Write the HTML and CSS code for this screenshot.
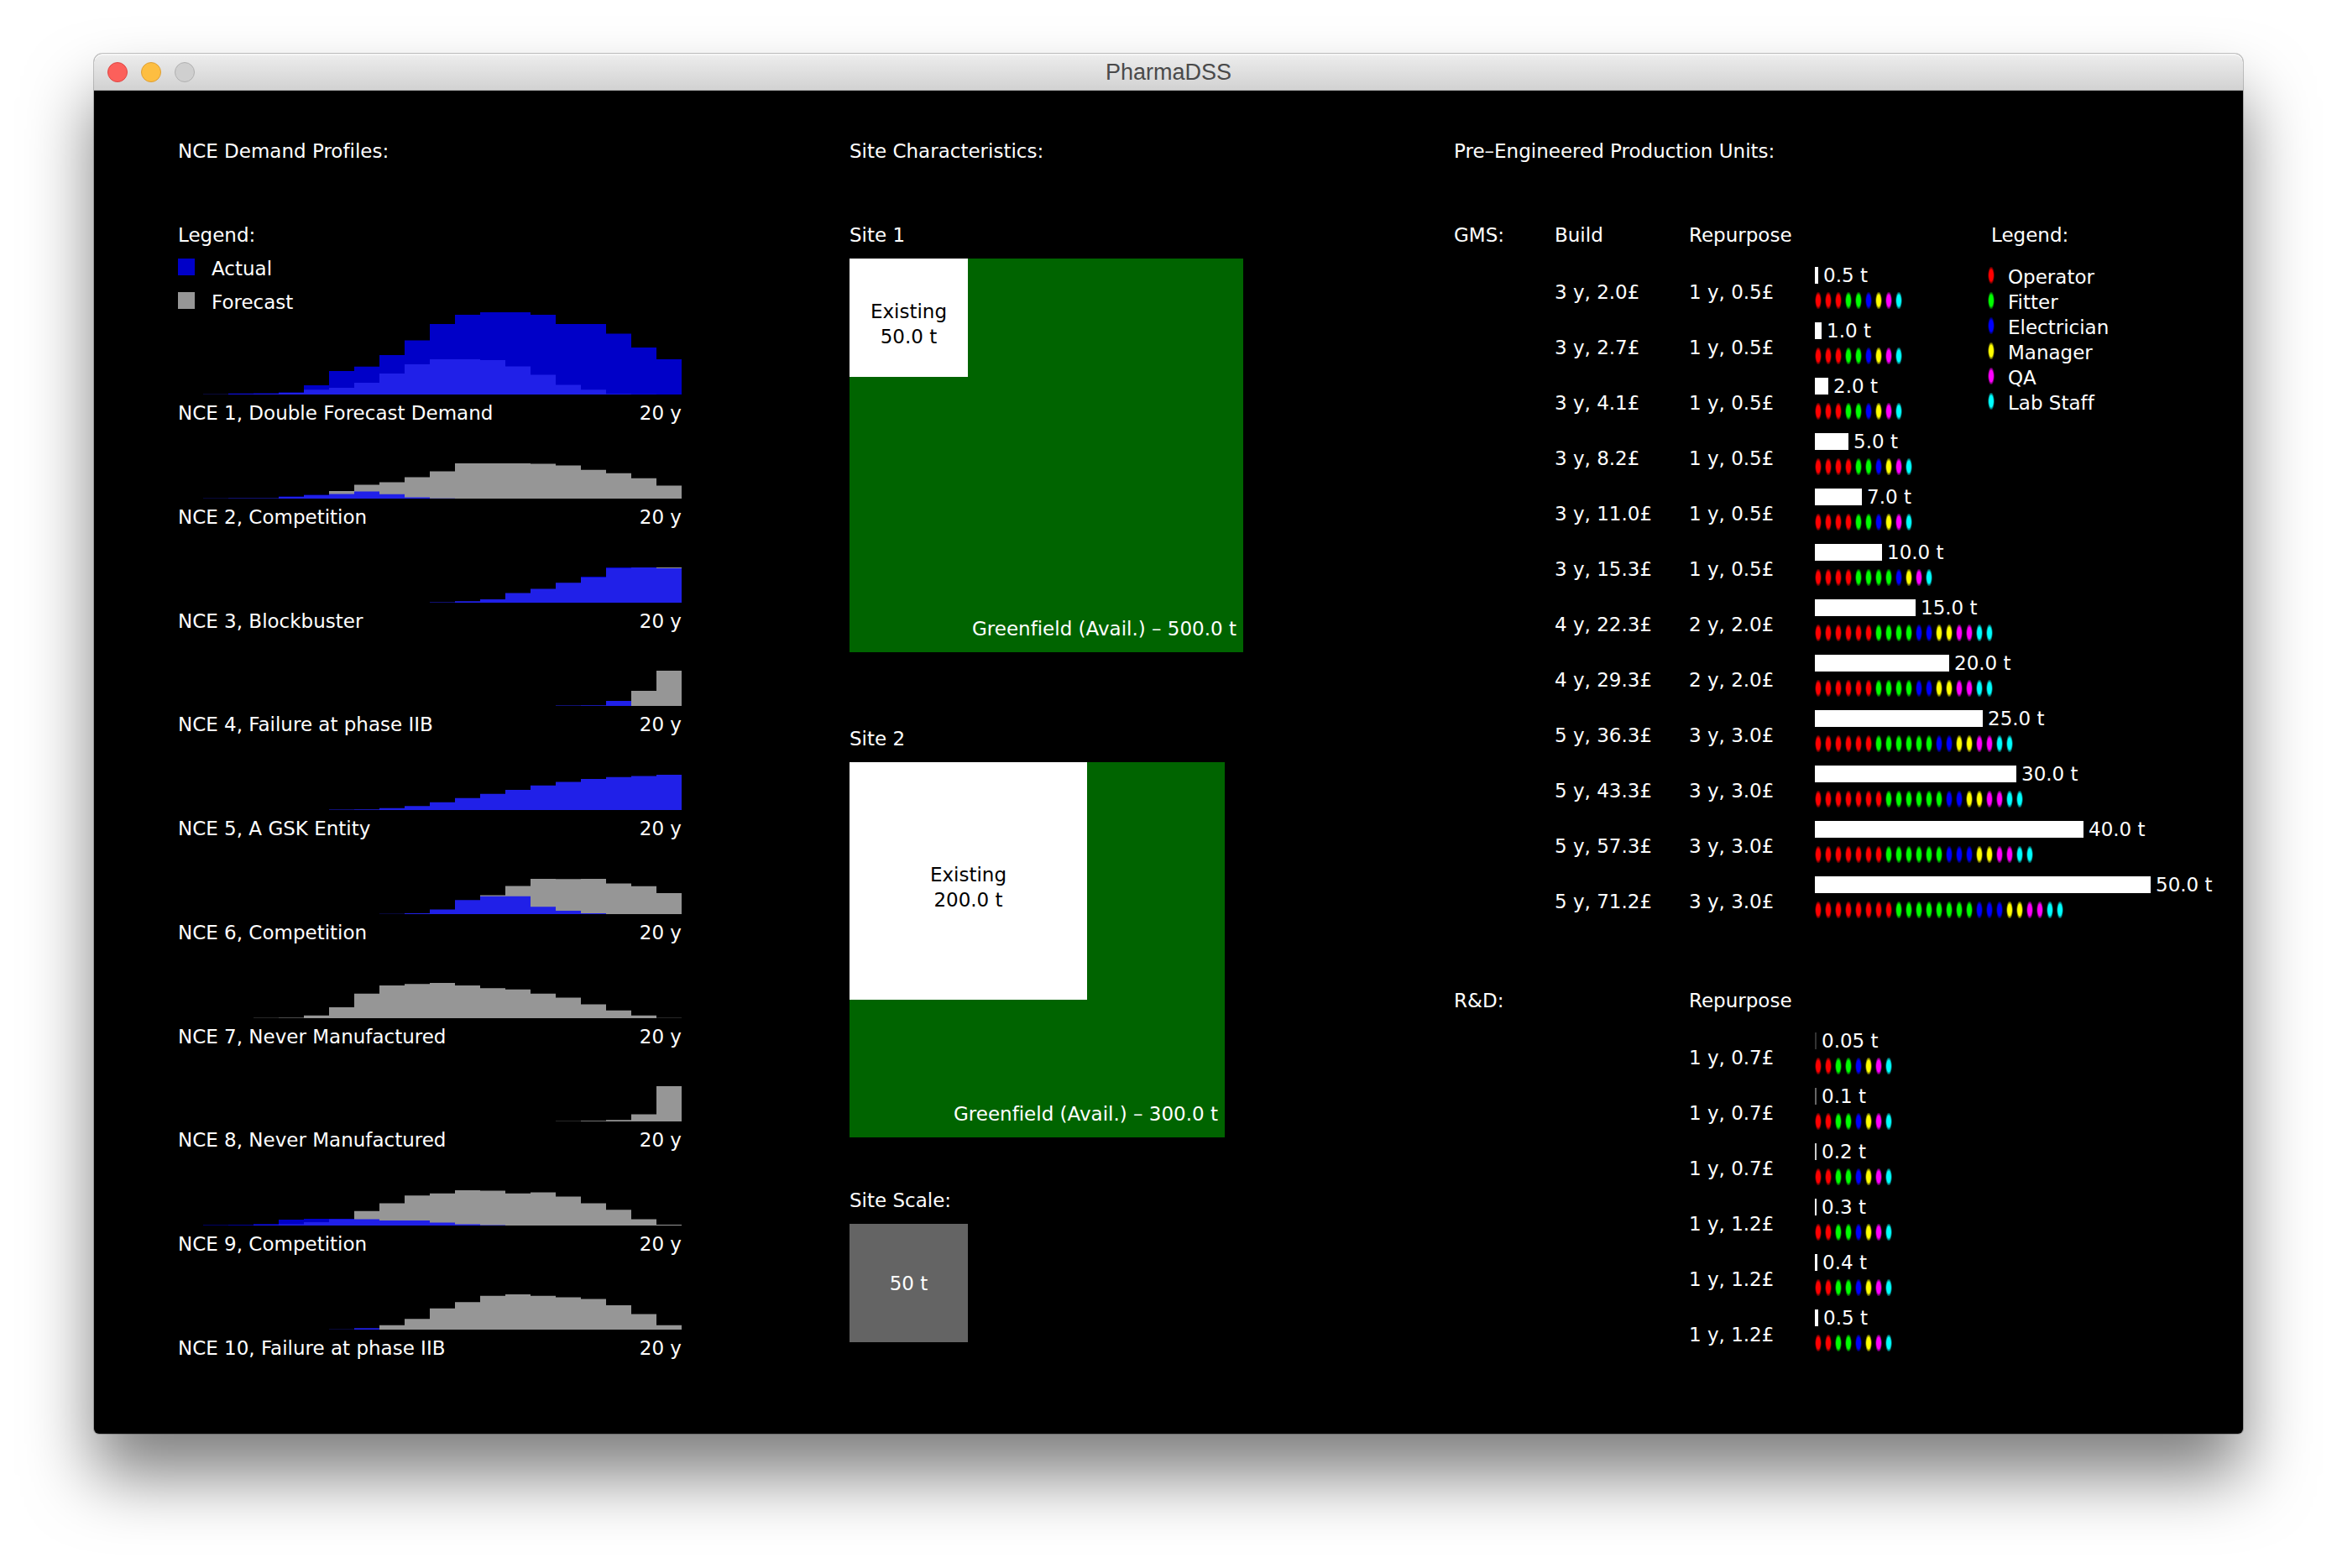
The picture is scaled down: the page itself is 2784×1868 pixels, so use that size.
FILE: index.html
```html
<!DOCTYPE html>
<html lang="en">
<head>
<meta charset="utf-8">
<title>PharmaDSS</title>
<link rel="stylesheet" href="styles.css">
</head>
<body>
<div class="window">
  <header class="titlebar">
    <div class="controls">
      <button class="control close" type="button" aria-label="Close"></button>
      <button class="control minimise" type="button" aria-label="Minimise"></button>
      <button class="control zoom" type="button" aria-label="Zoom" disabled></button>
    </div>
    <h1 class="title">PharmaDSS</h1>
  </header>

  <main class="workspace">
    <section class="panel">
      <h2 class="heading">NCE Demand Profiles:</h2>
      <div class="series-legend">
        <h3 class="label">Legend:</h3>
        <p class="key"><span class="swatch actual"></span>Actual</p>
        <p class="key"><span class="swatch forecast"></span>Forecast</p>
      </div>
      <div class="profiles" id="profiles"></div>
    </section>

    <section class="panel">
      <h2 class="heading">Site Characteristics:</h2>
      <article class="site">
        <h3 class="label">Site 1</h3>
        <div class="plot greenfield" style="width: 469px">
          <div class="plot existing" style="width: 141px"><span>Existing<br>50.0 t</span></div>
          <p class="available">Greenfield (Avail.) – 500.0 t</p>
        </div>
      </article>
      <article class="site">
        <h3 class="label">Site 2</h3>
        <div class="plot greenfield" style="width: 447px">
          <div class="plot existing" style="width: 283px"><span>Existing<br>200.0 t</span></div>
          <p class="available">Greenfield (Avail.) – 300.0 t</p>
        </div>
      </article>
      <article class="site-scale">
        <h3 class="label">Site Scale:</h3>
        <div class="plot scale" style="width: 141px">50 t</div>
      </article>
    </section>

    <section class="panel">
      <h2 class="heading">Pre–Engineered Production Units:</h2>
      <div class="units">
        <div class="tables">
          <table class="unit-table">
            <thead><tr><th scope="col">GMS:</th><th scope="col">Build</th><th scope="col">Repurpose</th><td></td></tr></thead>
            <tbody id="gms"></tbody>
          </table>
          <table class="unit-table">
            <thead><tr><th scope="col">R&amp;D:</th><td></td><th scope="col">Repurpose</th><td></td></tr></thead>
            <tbody id="rnd"></tbody>
          </table>
        </div>
        <aside class="staff-legend">
          <h3 class="label">Legend:</h3>
          <ul class="staff">
            <li class="staff-key"><span class="crew operator"></span>Operator</li>
            <li class="staff-key"><span class="crew fitter"></span>Fitter</li>
            <li class="staff-key"><span class="crew electrician"></span>Electrician</li>
            <li class="staff-key"><span class="crew manager"></span>Manager</li>
            <li class="staff-key"><span class="crew qa"></span>QA</li>
            <li class="staff-key"><span class="crew lab"></span>Lab Staff</li>
          </ul>
        </aside>
      </div>
    </section>
  </main>
</div>
<script src="script.js"></script>
</body>
</html>
```
FILE: styles.css
```css
* {
  box-sizing: border-box;
}

body {
  display: flex;
  flex-direction: column;
  min-height: 100vh;
  margin: 0;
  padding: 64px 112px 160px;
  background: #fff;
  color: #fff;
  font: 23px/30px "DejaVu Sans", sans-serif;
  font-variant-ligatures: none;
}

h1, h2, h3, p, ul {
  margin: 0;
  padding: 0;
  font: inherit;
  list-style: none;
}

.window {
  display: flex;
  flex: 1;
  flex-direction: column;
  border-radius: 10px 10px 6px 6px;
  background: #000;
  box-shadow: 0 0 0 1px rgba(0, 0, 0, .22), 0 50px 80px rgba(0, 0, 0, .5);
}

/* Title bar */
.titlebar {
  display: grid;
  grid-template-columns: 1fr auto 1fr;
  align-items: center;
  height: 44px;
  padding: 0 16px;
  border-bottom: 1px solid #adadad;
  border-radius: 10px 10px 0 0;
  background: linear-gradient(#ededed, #d2d2d2);
  box-shadow: inset 0 2px 0 #f5f5f5;
}

.controls {
  display: flex;
  gap: 16px;
}

.control {
  width: 24px;
  height: 24px;
  padding: 0;
  border: 1px solid;
  border-radius: 50%;
}

.close { background: #fc605b; border-color: #df4744; }
.minimise { background: #fdbe41; border-color: #de9f34; }
.zoom { background: #cfcfcf; border-color: #b1b1b1; }

.title {
  color: #4a4a4a;
  font: 27px/30px "Liberation Sans", sans-serif;
}

/* Panels */
.workspace {
  display: grid;
  flex: 1;
  grid-template-columns: 800fr 720fr 940fr;
  padding: 57px 0 87px 100px;
}

.panel {
  display: flex;
  flex-direction: column;
  min-width: 0;
}

.heading {
  margin-bottom: 70px;
}

/* Demand profiles */
.series-legend {
  display: flex;
  flex-direction: column;
  gap: 10px;
  margin-bottom: 47px;
}

.key {
  display: flex;
  align-items: center;
  gap: 20px;
}

.swatch {
  width: 20px;
  height: 20px;
  margin-bottom: 4px;
}

.swatch.actual { background: #0000c8; }
.swatch.forecast { background: #969696; }

.profiles {
  display: flex;
  flex: 1;
  flex-direction: column;
  justify-content: space-between;
  width: 600px;
}

.profile {
  display: grid;
  gap: 7px;
}

.chart {
  display: block;
  width: 100%;
  height: 48px;
  overflow: visible;
}

.chart .actual { fill: #0000c8; }
.chart .forecast { fill: #969696; }
.chart .both { fill: #2020e8; }

.caption {
  display: flex;
  justify-content: space-between;
}

/* Sites */
.site {
  margin-bottom: 88px;
}

.site + .site {
  margin-bottom: 60px;
}

.site .label,
.site-scale .label {
  margin-bottom: 13px;
}

.plot {
  display: flex;
  aspect-ratio: 1;
}

.greenfield {
  flex-direction: column;
  justify-content: space-between;
  background: #006400;
}

.existing {
  align-items: center;
  justify-content: center;
  padding-top: 14px;
  background: #fff;
  color: #000;
  text-align: center;
}

.available {
  padding: 0 8px 13px;
  text-align: right;
}

.scale {
  align-items: center;
  justify-content: center;
  background: #646464;
}

/* Production units: the staff legend shares the table's cell */
.units {
  display: grid;
}

.tables,
.staff-legend {
  grid-area: 1 / 1;
}

.tables {
  display: grid;
  gap: 77px;
}

.unit-table {
  width: 100%;
  border-collapse: collapse;
  table-layout: fixed;
}

.unit-table th,
.unit-table td {
  padding: 0;
  font-weight: normal;
  text-align: left;
  vertical-align: top;
}

.unit-table thead th { height: 43px; }
.unit-table thead :nth-child(1) { width: 120px; }
.unit-table thead :nth-child(2) { width: 160px; }
.unit-table thead :nth-child(3) { width: 150px; }

.unit-table tbody td {
  height: 66px;
  padding-top: 25px;
}

.unit-table tbody .capacity {
  padding-top: 5px;
}

.output {
  display: flex;
  align-items: center;
  gap: 6px;
  margin-bottom: 5px;
}

.bar {
  height: 20px;
  background: #fff;
}

.crews {
  display: flex;
}

.crew {
  width: calc(var(--count) * 12px);
  height: 20px;
  background: radial-gradient(4px 11px at 4px 10px, var(--tone) 60%, transparent) 0 0 / 12px 20px;
}

.operator { --tone: #f00; }
.fitter { --tone: #0f0; }
.electrician { --tone: #00f; }
.manager { --tone: #ff0; }
.qa { --tone: #f0f; }
.lab { --tone: #0ff; }

.staff-legend {
  justify-self: start;
  margin-left: 636px;
}

.staff-legend .label {
  margin: 0 0 20px 4px;
}

.staff-key {
  display: flex;
  align-items: center;
  gap: 16px;
}

.staff-key .crew {
  width: 8px;
  margin-bottom: 4px;
}
```
FILE: script.js
```js
// Yearly demand over 20 years, from year `start`; "both" is where actual and forecast coincide.
const profiles = [
  { name: "NCE 1, Double Forecast Demand",
    actual: [2, [.6, .8, 1.2, 5.5, 14, 16.6, 23.5, 32.2, 42, 47.5, 49, 49, 47.5, 42, 42, 36.3, 28, 21]],
    both: [1, [.1, .2, .4, 1, 2.9, 4, 7, 12.5, 18, 21, 21, 20.5, 16.8, 11.8, 5.8, 2.9, .4, .1]] },
  { name: "NCE 2, Competition",
    forecast: [6, [4.5, 8.2, 9.7, 12.7, 16.2, 21, 21, 21, 20.8, 19.7, 17.1, 15.1, 12.1, 7.7]],
    actual: [4, [1.3, 2.3]],
    both: [1, [.1, .2, .3, 1, 2, 2.7, 4.2, 2.6, .7, .1]] },
  { name: "NCE 3, Blockbuster",
    forecast: [19, [21]],
    actual: [16, [15.5, 21]],
    both: [8, [.05, .05, .2, .9, 2, 5.7, 8.2, 11.9, 15, 20.5, 21, 20.5]] },
  { name: "NCE 4, Failure at phase IIB",
    forecast: [18, [9, 21]],
    both: [15, [.2, .4, 3]] },
  { name: "NCE 5, A GSK Entity",
    both: [5, [.05, .2, .4, 1.1, 2.4, 4.6, 7.1, 9.6, 12, 14.6, 16.7, 18.5, 19.6, 20.3, 21]] },
  { name: "NCE 6, Competition",
    forecast: [12, [11.2, 16.7, 21, 20.9, 21, 18.2, 16.6, 12.5]],
    both: [7, [.05, .15, .5, 2.7, 8.4, 10.6, 10.6, 4.4, 2, .5]] },
  { name: "NCE 7, Never Manufactured",
    forecast: [2, [.05, .1, .3, 1.6, 6.5, 14.6, 19.5, 20.4, 21, 19.5, 17.9, 17.1, 14.6, 12.2, 8.2, 4.6, 1.6, .15]] },
  { name: "NCE 8, Never Manufactured",
    forecast: [15, [.1, .4, .9, 4.2, 21]] },
  { name: "NCE 9, Competition",
    forecast: [7, [8.6, 13.3, 17.9, 19.1, 21, 20.8, 19.1, 19.8, 17.2, 13.3, 9.4, 3.7, .5]],
    actual: [1, [.2, .4, .9, 3.5, 4, 4]],
    both: [3, [.4, .8, 2, 3.8, 3.8, 3, 3, 1.8, .8, .3]] },
  { name: "NCE 10, Failure at phase IIB",
    forecast: [8, [2.6, 6.4, 12.6, 16.4, 20.1, 21, 20.1, 19.2, 18.3, 14.5, 9.2, 2.6]],
    both: [5, [.05, .1, .9]] }
];

// A stepped outline standing on the chart's base line at y = 24.
function outline([start, values]) {
  const steps = values.map(v => `V${24 - v}h15`).join("");
  return `M${start * 15} 24${steps}V24z`;
}

document.getElementById("profiles").innerHTML = profiles.map(p => `
  <div class="profile">
    <svg class="chart" viewBox="0 0 300 24" role="img" aria-label="${p.name}">
      ${["forecast", "actual", "both"].filter(s => p[s]).map(s => `<path class="${s}" d="${outline(p[s])}"/>`).join("")}
    </svg>
    <div class="caption"><span>${p.name}</span><span>20 y</span></div>
  </div>`).join("");

const roles = ["operator", "fitter", "electrician", "manager", "qa", "lab"];

// Build cost, repurpose cost, capacity in tonnes, staff by role.
const gms = [
  ["3 y, 2.0£", "1 y, 0.5£", "0.5", [3, 2, 1, 1, 1, 1]],
  ["3 y, 2.7£", "1 y, 0.5£", "1.0", [3, 2, 1, 1, 1, 1]],
  ["3 y, 4.1£", "1 y, 0.5£", "2.0", [3, 2, 1, 1, 1, 1]],
  ["3 y, 8.2£", "1 y, 0.5£", "5.0", [4, 2, 1, 1, 1, 1]],
  ["3 y, 11.0£", "1 y, 0.5£", "7.0", [4, 2, 1, 1, 1, 1]],
  ["3 y, 15.3£", "1 y, 0.5£", "10.0", [4, 4, 1, 1, 1, 1]],
  ["4 y, 22.3£", "2 y, 2.0£", "15.0", [6, 4, 2, 2, 2, 2]],
  ["4 y, 29.3£", "2 y, 2.0£", "20.0", [6, 4, 2, 2, 2, 2]],
  ["5 y, 36.3£", "3 y, 3.0£", "25.0", [6, 6, 2, 2, 2, 2]],
  ["5 y, 43.3£", "3 y, 3.0£", "30.0", [7, 6, 2, 2, 2, 2]],
  ["5 y, 57.3£", "3 y, 3.0£", "40.0", [7, 6, 3, 2, 2, 2]],
  ["5 y, 71.2£", "3 y, 3.0£", "50.0", [8, 8, 3, 2, 2, 2]]
];
const rnd = [
  ["", "1 y, 0.7£", "0.05", [2, 2, 1, 1, 1, 1]],
  ["", "1 y, 0.7£", "0.1", [2, 2, 1, 1, 1, 1]],
  ["", "1 y, 0.7£", "0.2", [2, 2, 1, 1, 1, 1]],
  ["", "1 y, 1.2£", "0.3", [2, 2, 1, 1, 1, 1]],
  ["", "1 y, 1.2£", "0.4", [2, 2, 1, 1, 1, 1]],
  ["", "1 y, 1.2£", "0.5", [2, 2, 1, 1, 1, 1]]
];

// Bars run at 8px a tonne; one thinner than 2px fades instead of narrowing.
function row([build, repurpose, tonnes, staff]) {
  const width = tonnes * 8;
  const crews = staff.map((n, i) => `<span class="crew ${roles[i]}" style="--count: ${n}"></span>`).join("");
  return `<tr><td></td><td>${build}</td><td>${repurpose}</td><td class="capacity">
    <div class="output"><span class="bar" style="width: ${Math.max(2, Math.round(width))}px; opacity: ${Math.min(1, width / 2)}"></span>${tonnes} t</div>
    <div class="crews">${crews}</div></td></tr>`;
}

document.getElementById("gms").innerHTML = gms.map(row).join("");
document.getElementById("rnd").innerHTML = rnd.map(row).join("");
```
